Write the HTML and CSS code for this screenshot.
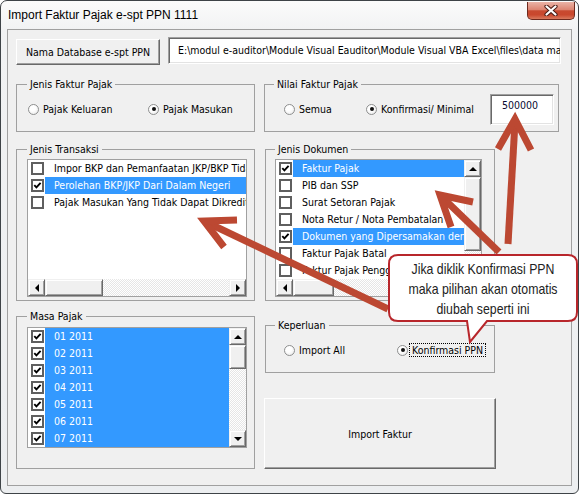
FILE: index.html
```html
<!DOCTYPE html>
<html lang="id">
<head>
<meta charset="utf-8">
<title>Import Faktur Pajak e-spt PPN 1111</title>
<link rel="stylesheet" href="styles.css">
</head>
<body>
<div class="window">
  <div class="titlebar">
    <span class="title">Import Faktur Pajak e-spt PPN 1111</span>
    <div class="close">
      <svg width="14" height="11" viewBox="0 0 14 11"><path d="M2.5 1.5 L11.5 9.5 M11.5 1.5 L2.5 9.5" stroke="#4a1d16" stroke-width="4.2" stroke-linecap="round"/><path d="M2.5 1.5 L11.5 9.5 M11.5 1.5 L2.5 9.5" stroke="#fff" stroke-width="2.2" stroke-linecap="round"/></svg>
    </div>
  </div>
  <div class="client">
    <div class="toprow">
      <div class="btn btn-db">Nama Database e-spt PPN</div>
      <div class="textbox tb-path">E:\modul e-auditor\Module Visual Eauditor\Module Visual VBA Excel\files\data master e-spt.mdb</div>
    </div>

    <div class="row row-a">
      <fieldset class="group g-faktur">
        <legend>Jenis Faktur Pajak</legend>
        <div class="opts">
          <div class="radio w-keluaran"><span class="dot"></span>Pajak Keluaran</div>
          <div class="radio on"><span class="dot"></span>Pajak Masukan</div>
        </div>
      </fieldset>
      <fieldset class="group g-nilai right">
        <legend>Nilai Faktur Pajak</legend>
        <div class="opts">
          <div class="radio w-semua"><span class="dot"></span>Semua</div>
          <div class="radio on"><span class="dot"></span>Konfirmasi/ Minimal</div>
          <div class="textbox tb-nilai">500000</div>
        </div>
      </fieldset>
    </div>

    <div class="row row-b">
      <fieldset class="group g-tall">
        <legend>Jenis Transaksi</legend>
        <div class="listbox lb-transaksi">
          <div class="items">
            <div class="item"><span class="cbcell"><span class="chk"></span></span><span class="txt">Impor BKP dan Pemanfaatan JKP/BKP Tidak Berwujud dari Luar Daerah Pabean</span></div>
            <div class="item sel"><span class="cbcell"><span class="chk on"><svg viewBox="0 0 9 9"><polyline points="1.3,4.2 3.4,6.4 7.6,1.8" fill="none" stroke="#000" stroke-width="1.9"/></svg></span></span><span class="txt">Perolehan BKP/JKP Dari Dalam Negeri</span></div>
            <div class="item"><span class="cbcell"><span class="chk"></span></span><span class="txt">Pajak Masukan Yang Tidak Dapat Dikreditkan</span></div>
          </div>
          <div class="hscroll">
            <span class="sbtn"><span class="tri tri-l"></span></span>
            <span class="thumb th-h1"></span>
            <span class="track"></span>
            <span class="sbtn"><span class="tri tri-r"></span></span>
          </div>
        </div>
      </fieldset>
      <fieldset class="group g-dok right">
        <legend>Jenis Dokumen</legend>
        <div class="listbox lb-dokumen">
          <div class="items">
            <div class="item sel"><span class="cbcell"><span class="chk on"><svg viewBox="0 0 9 9"><polyline points="1.3,4.2 3.4,6.4 7.6,1.8" fill="none" stroke="#000" stroke-width="1.9"/></svg></span></span><span class="txt">Faktur Pajak</span></div>
            <div class="item"><span class="cbcell"><span class="chk"></span></span><span class="txt">PIB dan SSP</span></div>
            <div class="item"><span class="cbcell"><span class="chk"></span></span><span class="txt">Surat Setoran Pajak</span></div>
            <div class="item"><span class="cbcell"><span class="chk"></span></span><span class="txt">Nota Retur / Nota Pembatalan</span></div>
            <div class="item sel"><span class="cbcell"><span class="chk on"><svg viewBox="0 0 9 9"><polyline points="1.3,4.2 3.4,6.4 7.6,1.8" fill="none" stroke="#000" stroke-width="1.9"/></svg></span></span><span class="txt">Dokumen yang Dipersamakan dengan Faktur Pajak</span></div>
            <div class="item"><span class="cbcell"><span class="chk"></span></span><span class="txt">Faktur Pajak Batal</span></div>
            <div class="item"><span class="cbcell"><span class="chk"></span></span><span class="txt">Faktur Pajak Pengganti</span></div>
          </div>
          <div class="vscroll">
            <span class="sbtn"><span class="tri tri-u"></span></span>
            <span class="thumb th-v1"></span>
            <span class="track"></span>
            <span class="sbtn"><span class="tri tri-d"></span></span>
          </div>
          <div class="hscroll">
            <span class="sbtn"><span class="tri tri-l"></span></span>
            <span class="thumb th-h2"></span>
            <span class="track"></span>
            <span class="sbtn"><span class="tri tri-r"></span></span>
          </div>
          <div class="corner"></div>
        </div>
      </fieldset>
    </div>

    <div class="row row-c">
      <fieldset class="group g-tall g-masa">
        <legend>Masa Pajak</legend>
        <div class="listbox lb-masa">
          <div class="items">
            <div class="item sel"><span class="cbcell"><span class="chk on"><svg viewBox="0 0 9 9"><polyline points="1.3,4.2 3.4,6.4 7.6,1.8" fill="none" stroke="#000" stroke-width="1.9"/></svg></span></span><span class="txt">01 2011</span></div>
            <div class="item sel"><span class="cbcell"><span class="chk on"><svg viewBox="0 0 9 9"><polyline points="1.3,4.2 3.4,6.4 7.6,1.8" fill="none" stroke="#000" stroke-width="1.9"/></svg></span></span><span class="txt">02 2011</span></div>
            <div class="item sel"><span class="cbcell"><span class="chk on"><svg viewBox="0 0 9 9"><polyline points="1.3,4.2 3.4,6.4 7.6,1.8" fill="none" stroke="#000" stroke-width="1.9"/></svg></span></span><span class="txt">03 2011</span></div>
            <div class="item sel"><span class="cbcell"><span class="chk on"><svg viewBox="0 0 9 9"><polyline points="1.3,4.2 3.4,6.4 7.6,1.8" fill="none" stroke="#000" stroke-width="1.9"/></svg></span></span><span class="txt">04 2011</span></div>
            <div class="item sel"><span class="cbcell"><span class="chk on"><svg viewBox="0 0 9 9"><polyline points="1.3,4.2 3.4,6.4 7.6,1.8" fill="none" stroke="#000" stroke-width="1.9"/></svg></span></span><span class="txt">05 2011</span></div>
            <div class="item sel"><span class="cbcell"><span class="chk on"><svg viewBox="0 0 9 9"><polyline points="1.3,4.2 3.4,6.4 7.6,1.8" fill="none" stroke="#000" stroke-width="1.9"/></svg></span></span><span class="txt">06 2011</span></div>
            <div class="item sel"><span class="cbcell"><span class="chk on"><svg viewBox="0 0 9 9"><polyline points="1.3,4.2 3.4,6.4 7.6,1.8" fill="none" stroke="#000" stroke-width="1.9"/></svg></span></span><span class="txt">07 2011</span></div>
          </div>
          <div class="vscroll">
            <span class="sbtn"><span class="tri tri-u"></span></span>
            <span class="thumb th-v2"></span>
            <span class="track"></span>
            <span class="sbtn"><span class="tri tri-d"></span></span>
          </div>
        </div>
      </fieldset>
      <div class="rightcol">
        <fieldset class="group g-keperluan right">
          <legend>Keperluan</legend>
          <div class="opts">
            <div class="radio w-importall"><span class="dot"></span>Import All</div>
            <div class="radio on"><span class="dot"></span><span class="focus">Konfirmasi PPN</span></div>
          </div>
        </fieldset>
        <div class="btn btn-import">Import Faktur</div>
      </div>
    </div>
  </div>

  <div class="overlay">
    <svg class="annot" width="579" height="494" viewBox="0 0 579 494">
      <g fill="none" stroke="#bc4832" stroke-width="7" stroke-linejoin="miter">
        <line x1="388" y1="309" x2="206" y2="222"/>
        <polyline points="237,220 204,221 224,247"/>
        <line x1="499" y1="252" x2="442" y2="197"/>
        <polyline points="473,202 440,195 451,227"/>
        <line x1="508" y1="244" x2="515" y2="122"/>
        <polyline points="498,149 515,119 531,150"/>
      </g>
      <path d="M398 255 H568 Q577 255 577 264 V312 Q577 321 568 321 H487 L470 342 L467 321 H398 Q389 321 389 312 V264 Q389 255 398 255 Z" fill="#fff" stroke="#b8262b" stroke-width="2"/>
    </svg>
    <div class="callout-text">Jika diklik Konfirmasi PPN<br>maka pilihan akan otomatis<br>diubah seperti ini</div>
  </div>
</div>
</body>
</html>
```

FILE: styles.css
```css
* { box-sizing: border-box; }
html, body { margin: 0; padding: 0; }
body {
  width: 579px; height: 494px; overflow: hidden; background: #fff;
  font-family: "DejaVu Sans Condensed", "DejaVu Sans", sans-serif;
  font-size: 10.5px; color: #000;
}
.window {
  position: relative; width: 579px; height: 494px;
  border: 1px solid #3e4347; border-radius: 7px 7px 6px 6px;
  background: linear-gradient(#fbfbfb, #f1f2f3 30px, #eceef0);
  display: flex; flex-direction: column; overflow: hidden;
}
.titlebar { height: 28px; flex: none; display: flex; align-items: center; padding-left: 7px; }
.title { font-family: "Liberation Sans", sans-serif; font-size: 12px; color: #000; }
.close {
  margin-left: auto; align-self: flex-start; margin-top: 1px; margin-right: 3px;
  width: 48px; height: 18px;
  border: 1px solid #6d2a1e; border-top: none; border-radius: 0 0 5px 5px;
  background: linear-gradient(#eab3a6 0%, #dd8572 45%, #c84a30 52%, #c9472d 75%, #d9795d 100%);
  display: flex; align-items: center; justify-content: center;
}
.client {
  flex: none; height: 457px; margin: 0 6px;
  border: 1px solid #a0a0a0; background: #f0f0f0;
  padding: 7px 0 0 8px;
}
.toprow { display: flex; align-items: flex-start; gap: 8px; height: 28px; }
.btn {
  background: #f0f0f0; border: 1px solid;
  border-color: #fff #696969 #696969 #fff;
  box-shadow: inset -1px -1px 0 #a0a0a0;
  display: flex; align-items: center; justify-content: center; white-space: nowrap;
}
.btn-db { width: 144px; height: 26px; margin-top: 2px; }
.textbox {
  background: #fff; border: 1px solid;
  border-color: #a0a0a0 #fff #fff #a0a0a0;
  box-shadow: inset 1px 1px 0 #696969, inset -1px -1px 0 #e3e3e3;
  white-space: nowrap; overflow: hidden;
}
.tb-path { width: 393px; height: 27px; padding: 6px 3px 0 9px; line-height: 13px; }
.row { display: flex; gap: 9px; align-items: flex-start; }
.row-a { margin-top: 13px; }
.row-b { margin-top: 11px; }
.row-c { margin-top: 9px; }
.group {
  margin: 0; padding: 0; min-width: 0;
  border: 1px solid #a0a0a0;
}
.group legend { padding: 0 3px; margin-left: 10px; line-height: 13px; font-size: 10.5px; }
.group.right legend { margin-left: 9px; }
.g-faktur { width: 239px; height: 54px; }
.g-faktur .opts { padding: 10px 0 0 11px; }
.g-nilai { width: 295px; height: 54px; }
.g-nilai .opts { padding: 3px 0 0 19px; }
.opts { display: flex; align-items: flex-start; }
.radio { display: flex; align-items: center; height: 16px; white-space: nowrap; }
.g-nilai .radio { margin-top: 7px; }
.dot {
  width: 11px; height: 11px; border-radius: 50%; flex: none;
  border: 1px solid #8e8f8f; margin-right: 4px;
  background: radial-gradient(circle at 40% 35%, #fff 0 35%, #e4e4e4 100%);
  display: flex; align-items: center; justify-content: center;
}
.radio.on .dot::after { content: ""; width: 4px; height: 4px; border-radius: 50%; background: #111; }
.w-keluaran { width: 120px; }
.w-semua { width: 82px; }
.w-importall { width: 113px; }
.tb-nilai { width: 64px; height: 31px; margin-left: auto; margin-right: 4px; padding: 4px 0 0 11px; line-height: 13px; color: #0a0a30; }

.g-tall { width: 239px; height: 158px; }
.g-dok { width: 230px; height: 158px; margin-left: 1px; }
.g-masa { height: 159px; }

.listbox {
  background: #fff; border: 1px solid #a0a0a0;
  display: grid; overflow: hidden;
}
.lb-transaksi { width: 220px; height: 138px; margin: 3px 0 0 10px; grid-template-rows: 1fr 17px; }
.lb-dokumen { width: 207px; height: 138px; margin: 3px 0 0 9px; grid-template-columns: 1fr 17px; grid-template-rows: 1fr 17px; }
.lb-masa { width: 220px; height: 121px; margin: 4px 0 0 10px; grid-template-columns: 1fr 17px; }
.items { overflow: hidden; min-width: 0; min-height: 0; }
.item { display: flex; height: 17px; }
.cbcell { width: 17px; flex: none; display: flex; align-items: center; padding-left: 3px; }
.chk {
  width: 13px; height: 13px; border: 2px solid #5f5f5f; background: #fff;
  display: flex; align-items: center; justify-content: center;
}
.chk svg { width: 9px; height: 9px; display: block; }
.txt { flex: 1; min-width: 0; padding-left: 9px; line-height: 17px; white-space: nowrap; overflow: hidden; }
.item.sel .txt { background: #3399ff; color: #fff; }

.hscroll, .vscroll {
  display: flex;
  background: repeating-conic-gradient(#fff 0 25%, #e6e6e6 0 50%) 0 0 / 2px 2px;
  min-width: 0; min-height: 0; overflow: hidden;
}
.hscroll { height: 17px; }
.vscroll { flex-direction: column; width: 17px; }
.sbtn, .thumb {
  flex: none; width: 17px; height: 17px; background: #f0f0f0;
  border: 1px solid; border-color: #f0f0f0 #696969 #696969 #f0f0f0;
  box-shadow: inset 1px 1px 0 #fff, inset -1px -1px 0 #a0a0a0;
  display: flex; align-items: center; justify-content: center;
}
.track { flex: 1; }
.th-h1 { width: 58px; }
.th-h2 { width: 41px; }
.th-v1 { height: 74px; }
.th-v2 { height: 24px; }
.corner { background: #f0f0f0; }
.tri { width: 0; height: 0; border-style: solid; }
.tri-l { border-width: 4px 4px 4px 0; border-color: transparent #000 transparent transparent; }
.tri-r { border-width: 4px 0 4px 4px; border-color: transparent transparent transparent #000; }
.tri-u { border-width: 0 4px 4px 4px; border-color: transparent transparent #000 transparent; }
.tri-d { border-width: 4px 4px 0 4px; border-color: #000 transparent transparent transparent; }

.rightcol { display: flex; flex-direction: column; margin-top: 9px; }
.g-keperluan { width: 230px; height: 54px; margin-left: 1px; }
.g-keperluan .opts { padding: 10px 0 0 18px; }
.focus { border: 1px dotted #000; padding: 0 2px; margin-left: -3px; line-height: 12px; }
.btn-import { width: 232px; height: 71px; margin-top: 25px; }

.overlay { position: absolute; left: -1px; top: -1px; width: 579px; height: 494px; pointer-events: none; }
.annot { position: absolute; left: 0; top: 0; }
.callout-text {
  position: absolute; left: 389px; top: 259px; width: 188px;
  text-align: center; color: #222;
  font-family: "Liberation Sans", sans-serif;
  font-size: 15px; line-height: 20px;
  transform: scaleX(0.82); transform-origin: 50% 50%;
}
```
